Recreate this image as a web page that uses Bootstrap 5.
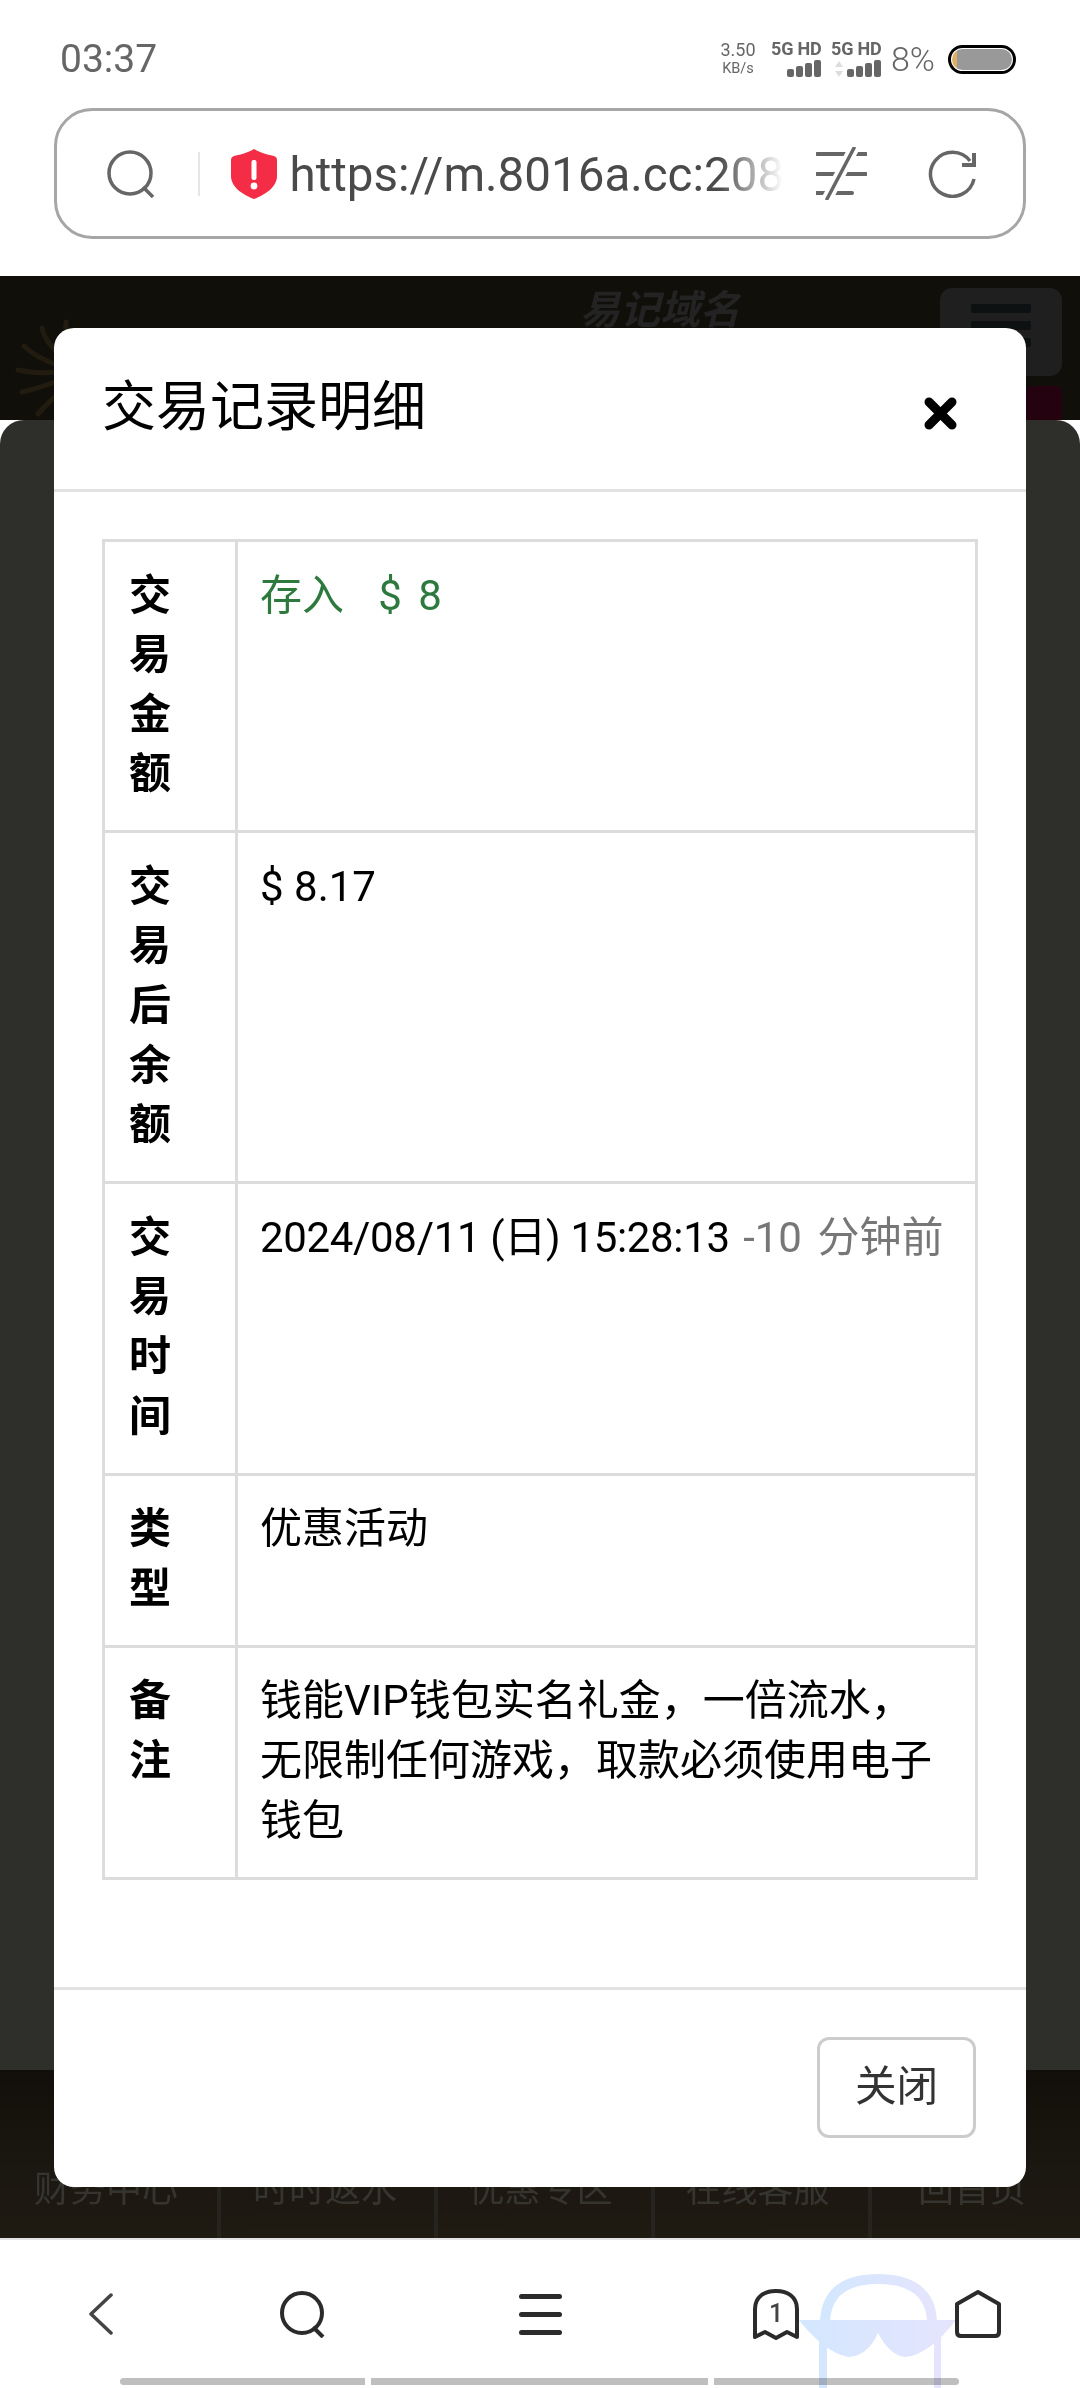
<!DOCTYPE html>
<html lang="zh-CN">
<head>
<meta charset="utf-8">
<title>交易记录明细</title>
<link rel="stylesheet" href="https://cdn.jsdelivr.net/npm/bootstrap@5.3.0/dist/css/bootstrap.min.css">
<style>
  html, body { margin: 0; background: #fff; }
  body { font-family: Roboto, "Noto Sans CJK SC", sans-serif; color: #000; }
  .phone { width: 1080px; height: 2388px; overflow: hidden; position: relative; }

  /* status bar */
  .statusbar { height: 108px; padding: 10px 64px 0 60px; color: #666; }
  .clock { font-size: 39px; line-height: 1; }
  .speed { width: 38px; text-align: center; line-height: 1; margin-right: 14px; }
  .speed-num { font-size: 18px; display: block; margin-bottom: 3px; }
  .speed-unit { font-size: 14.5px; display: block; }
  .sim { width: 50px; margin-right: 10px; }
  .sim-name { font-size: 18px; font-weight: 700; line-height: 15px; white-space: nowrap; letter-spacing: -.2px; }
  .sim-bars { gap: 2px; height: 18px; margin-top: 3px; }
  .sim-bars i { display: block; width: 7px; background: #666; border-radius: 2px; }
  .sim-arrows { width: 8px; height: 16px; margin-right: 2px; }
  .percent { font-size: 34px; font-weight: 300; line-height: 1; margin-right: 13px; }
  .battery { width: 68px; height: 29px; border: 3px solid #000; border-radius: 15px; background: #fff; padding: 1px; }
  .battery-fill { height: 100%; background: linear-gradient(90deg, #e0ae62 0 5px, #999 5px); border-radius: 12px; }

  /* address bar */
  .addr-wrap { height: 168px; padding: 0 54px; }
  .addr { height: 131px; border: 3.5px solid #a6a6a6; border-radius: 38px; padding-left: 49.5px; }
  .addr-sep { width: 2px; height: 44px; background: #e6e6e6; margin: 0 31px 0 43px; }
  .addr-url { width: 493px; margin: 2px 0 0 13px; font-size: 47.5px; color: #4a4a4a; white-space: nowrap; line-height: 60px;
    -webkit-mask-image: linear-gradient(90deg, #000 87%, transparent 100%); mask-image: linear-gradient(90deg, #000 87%, transparent 100%); }
  .ico-filter { margin-left: 33px; }
  .ico-reload { margin-left: 61px; }

  /* dimmed page behind the dialog */
  .stage { height: 1962px; position: relative; }
  .top-strip { height: 144px; background: #110f0a; position: relative; }
  .sun { margin-left: 14px; margin-top: 38px; }
  .brand { position: absolute; left: 580px; top: 11px; font-size: 40px; font-weight: 700; font-style: italic; color: #232323; line-height: 48px; }
  .burger { position: absolute; left: 940px; top: 12px; width: 122px; height: 88px; background: #1f1f1f; border-radius: 12px; }
  .burger i { display: block; width: 60px; height: 9px; background: #0e1112; border-radius: 2px; }
  .alert-dot { position: absolute; left: 1026px; top: 110px; width: 36px; height: 34px; background: #25020f; border-radius: 6px 6px 0 0; }
  .panel { height: 1650px; background: #2e2f2b; border-radius: 24px 24px 0 0; }
  .tabs { height: 168px; background: linear-gradient(180deg, #120f0a 0%, #1b1811 60%, #1f1a12 100%); }
  .tab { flex: 0 0 217px; padding: 96px 8px 0 0; text-align: center; font-size: 36px; line-height: 48px; color: #35342f; border-right: 4px solid #25241f; white-space: nowrap; }
  .tab:first-child { flex-basis: 221px; padding-right: 5px; }
  .tab:nth-child(2) { padding-right: 5px; }
  .tab:last-child { flex: 1 1 0; border-right: 0; }

  /* dialog */
  .sheet { position: absolute; left: 54px; top: 52px; width: 972px; }
  .sheet .modal-content { border: 0; border-radius: 20px; background: #fff; }
  .sheet .modal-header { height: 164px; padding: 0 48px; border-bottom: 3px solid #e2e2e2; border-radius: 0; }
  .sheet .modal-title { font-size: 54px; line-height: 74px; font-weight: 400; margin-top: -2px; }
  .x-btn { border: 0; background: none; padding: 0; margin: 10px 21px 0 0; width: 33px; height: 33px; line-height: 0; }
  .sheet .modal-body { padding: 47px 48px 0; }
  .deal { --bs-border-width: 3px; --bs-border-color: #dcdcdc; --bs-table-color: #000; --bs-table-bg: #fff; table-layout: fixed; width: 876px; margin-bottom: 107px; font-size: 42px; line-height: 59.6px; }
  .deal.table > tbody > tr > * { padding: 23.5px 25px 26.5px 22px; vertical-align: top; font-weight: 400; }
  .deal.table > tbody > tr > th { font-weight: 700; padding-left: 24px; padding-right: 45px; word-break: break-all; }
  .col-key { width: 133px; }
  .in-money { color: #2e7a3e; word-spacing: 1px; }
  .in-sum { word-spacing: 6px; }
  .stamp { letter-spacing: -.33px; }
  .ago { color: #777; margin-left: 3px; word-spacing: 5px; }
  .sheet .modal-footer { height: 200px; padding: 47px 50px 49px; border-top: 3px solid #e2e2e2; }
  .sheet .modal-footer > .shut { margin: 0; width: 159px; height: 101px; font-size: 41.6px; line-height: 1; color: #333; background: #fff; border: 3px solid #ccc; border-radius: 12px; padding: 0; }

  /* browser toolbar */
  .toolbar { height: 150px; border-top: 2px solid #e4e4e4; position: relative; background: #fff; }
  .tool-row { height: 138px; padding-top: 10px; display: grid; grid-template-columns: 202px 202px 272px 200px 204px; }
  .menu-bars { width: 43px; gap: 13px; }
  .menu-bars i { display: block; height: 5px; border-radius: 3px; background: #2b2b2b; }
  .pills { gap: 6px; margin-left: 120px; }
  .pills i { display: block; height: 7px; background: #bfbfbf; }
  .ghost { position: absolute; left: 790px; top: 34px; mix-blend-mode: multiply; }
</style>
</head>
<body>
<div class="phone d-flex flex-column">

  <!-- status bar -->
  <div class="statusbar d-flex align-items-center justify-content-between">
    <span class="clock">03:37</span>
    <div class="d-flex align-items-center">
      <div class="speed"><span class="speed-num">3.50</span><span class="speed-unit">KB/s</span></div>
      <div class="sim">
        <div class="sim-name">5G HD</div>
        <div class="sim-bars d-flex align-items-end justify-content-end">
          <i style="height:8px"></i><i style="height:11px"></i><i style="height:14px"></i><i style="height:17px"></i>
        </div>
      </div>
      <div class="sim">
        <div class="sim-name">5G HD</div>
        <div class="sim-bars d-flex align-items-end justify-content-end">
          <svg class="sim-arrows" viewBox="0 0 8 16"><path d="M4 0 8 6H0zM4 16 0 10h8z" fill="#ddd"/></svg>
          <i style="height:8px"></i><i style="height:11px"></i><i style="height:14px"></i><i style="height:17px"></i>
        </div>
      </div>
      <span class="percent">8%</span>
      <div class="battery"><div class="battery-fill"></div></div>
    </div>
  </div>

  <!-- address bar -->
  <div class="addr-wrap">
    <div class="addr d-flex align-items-center">
      <svg width="48" height="48" viewBox="0 0 48 48" fill="none" stroke="#666" stroke-width="3.5">
        <circle cx="23" cy="23" r="21"/><path d="M36 37 46 47"/>
      </svg>
      <span class="addr-sep"></span>
      <svg width="46" height="50" viewBox="0 0 46 50">
        <path d="M23 0C30 4 38 6 43 7Q46 8 46 11V27C46 38 34 46 23 50 12 46 0 38 0 27V11Q0 8 3 7C8 6 16 4 23 0Z" fill="#f42c46"/>
        <rect x="20.5" y="11" width="5" height="20" rx="2" fill="#fff"/><circle cx="23" cy="37" r="3.4" fill="#fff"/>
      </svg>
      <span class="addr-url">https://m.8016a.cc:208</span>
      <svg class="ico-filter" width="51" height="53" viewBox="0 0 51 53" fill="none" stroke="#666">
        <path d="M1 7H50M1 27H50M0 46H36" stroke-width="4" stroke-linecap="round"/>
        <path d="M38 1 11 52" stroke="#fff" stroke-width="11"/>
        <path d="M38 1 11 52" stroke-width="3.5" stroke-linecap="round"/>
      </svg>
      <svg class="ico-reload" width="48" height="48" viewBox="0 0 48 48" fill="none" stroke="#666" stroke-width="3.5">
        <path d="M46 29A22 22 0 1 1 42 11"/><path d="M46 3V15H34" stroke-width="4"/>
      </svg>
    </div>
  </div>

  <!-- page behind the dialog -->
  <div class="stage">
    <div class="top-strip">
      <svg class="sun" width="100" height="106" viewBox="0 0 100 106" fill="none" stroke="#221c10" stroke-width="5" stroke-linecap="round">
        <path d="M52 8Q50 24 64 40M28 14Q32 32 54 46M10 32Q22 44 46 52M4 56Q22 60 44 58M8 78Q26 74 46 66M24 100Q36 86 52 74"/>
      </svg>
      <span class="brand">易记域名</span>
      <div class="burger d-flex flex-column align-items-center justify-content-start gap-2 pt-3">
        <i></i><i></i><i></i>
      </div>
      <span class="alert-dot"></span>
    </div>
    <div class="panel"></div>
    <div class="tabs d-flex">
      <div class="tab">财务中心</div>
      <div class="tab">时时返水</div>
      <div class="tab">优惠专区</div>
      <div class="tab">在线客服</div>
      <div class="tab">回首页</div>
    </div>

    <!-- transaction detail dialog -->
    <div class="sheet">
      <div class="modal-content">
        <div class="modal-header justify-content-between">
          <h4 class="modal-title">交易记录明细</h4>
          <button type="button" class="x-btn" aria-label="关闭">
            <svg width="33" height="33" viewBox="0 0 33 33"><path d="M5 5 28 28M28 5 5 28" stroke="#000" stroke-width="9" stroke-linecap="round"/></svg>
          </button>
        </div>
        <div class="modal-body">
          <table class="table table-bordered deal">
            <colgroup><col class="col-key"><col></colgroup>
            <tbody>
              <tr><th scope="row">交易金额</th><td class="in-money">存入 &nbsp; <span class="in-sum">$ 8</span></td></tr>
              <tr><th scope="row">交易后余额</th><td>$ 8.17</td></tr>
              <tr><th scope="row">交易时间</th><td><span class="stamp">2024/08/11 (日) 15:28:13</span> <span class="ago">-10 分钟前</span></td></tr>
              <tr><th scope="row">类型</th><td>优惠活动</td></tr>
              <tr><th scope="row">备注</th><td>钱能VIP钱包实名礼金，一倍流水，无限制任何游戏，取款必须使用电子钱包</td></tr>
            </tbody>
          </table>
        </div>
        <div class="modal-footer">
          <button type="button" class="btn shut">关闭</button>
        </div>
      </div>
    </div>
  </div>

  <!-- browser toolbar -->
  <div class="toolbar">
    <div class="tool-row">
      <div class="d-flex align-items-center justify-content-center">
        <svg width="24" height="42" viewBox="0 0 24 42" fill="none" stroke="#444" stroke-width="3.5" stroke-linecap="round" stroke-linejoin="round"><path d="M22 2 2 21 22 40"/></svg>
      </div>
      <div class="d-flex align-items-center justify-content-center">
        <svg width="46" height="48" viewBox="0 0 46 48" fill="none" stroke="#2b2b2b" stroke-width="4"><circle cx="22" cy="23" r="20"/><path d="M33 37 43 47"/></svg>
      </div>
      <div class="d-flex align-items-center justify-content-center">
        <div class="menu-bars d-flex flex-column"><i></i><i></i><i></i></div>
      </div>
      <div class="d-flex align-items-center justify-content-center">
        <svg width="46" height="51" viewBox="0 0 46 51" fill="none" stroke="#2b2b2b" stroke-width="4" stroke-linejoin="round">
          <path d="M2 48V20C2 8 11 2 23 2S44 8 44 20V48L34 43 23 49 12 43Z"/>
          <text x="23" y="33" text-anchor="middle" font-size="25" font-weight="500" font-family="Roboto, sans-serif" fill="#444" stroke="none">1</text>
        </svg>
      </div>
      <div class="d-flex align-items-center justify-content-center">
        <svg width="46" height="48" viewBox="0 0 46 48" fill="none" stroke="#2b2b2b" stroke-width="4" stroke-linejoin="round"><path d="M23 2 44 14V42Q44 46 40 46H6Q2 46 2 42V14Z"/></svg>
      </div>
    </div>
    <div class="pills d-flex">
      <i class="rounded-start" style="width:245px"></i><i style="width:337px"></i><i class="rounded-end" style="width:245px"></i>
    </div>
    <!-- floating assistant mascot over the toolbar -->
    <svg class="ghost" width="170" height="116" viewBox="0 0 170 116" fill="none">
      <defs><linearGradient id="mascot" x1="0" x2="1" y1="0" y2="0"><stop offset="0" stop-color="#d3e7ff"/><stop offset="1" stop-color="#e5e4fd"/></linearGradient></defs>
      <path d="M37 50C37 16 60 5 90 5S144 16 144 50" stroke="url(#mascot)" stroke-width="10" transform="translate(-2 0)"/>
      <path d="M9 46H166Q140 80 116 83 100 82 88 59 78 82 58 83 34 78 9 46Z" fill="url(#mascot)"/>
      <path d="M29 60H37V116H29ZM144 60H151V116H144Z" fill="url(#mascot)"/>
    </svg>
  </div>
</div>
<script src="https://cdn.jsdelivr.net/npm/bootstrap@5.3.0/dist/js/bootstrap.bundle.min.js"></script>
</body>
</html>
